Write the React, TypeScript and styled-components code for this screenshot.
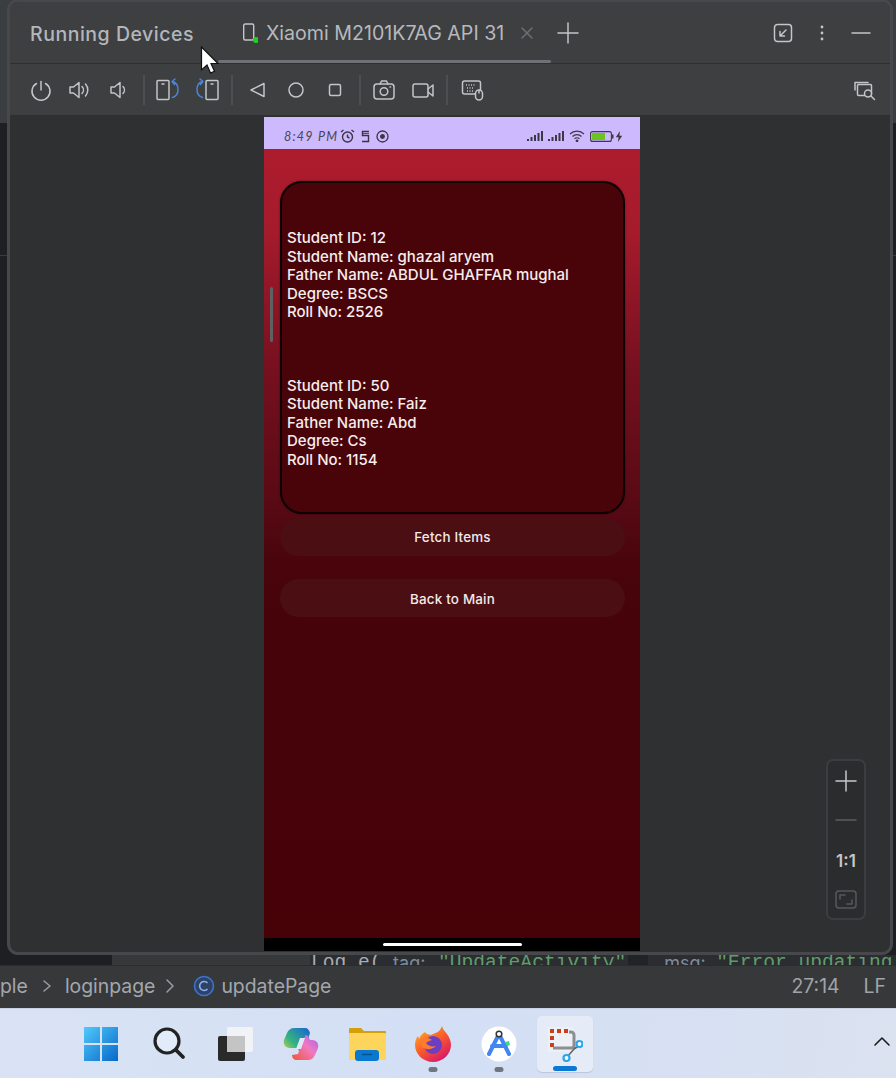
import React from "react";
import styled, { createGlobalStyle } from "styled-components";

const Global = createGlobalStyle`
  html, body { margin: 0; padding: 0; background: #2b2d30; overflow: hidden; }
  * { box-sizing: border-box; }
`;

const Page = styled.div`
  width: 896px; height: 1078px; display: flex; flex-direction: column;
  font-family: Inter, "Noto Sans", sans-serif; overflow: hidden;
`;
const Stage = styled.div`
  position: relative; height: 965px; flex: none; overflow: hidden;
  background: linear-gradient(180deg, #3b3e40 0 123px, #1e1f22 123px 255px, #3a3b3e 255px 256px, #1e1f22 256px);
  display: flex; align-items: flex-end;
`;
const CodeLine = styled.div`
  height: 10px; width: 100%; padding-left: 311px; display: flex; white-space: pre;
  font: 19.6px/16px "Liberation Mono", monospace; color: #a9abb0; overflow: hidden;
  background: linear-gradient(90deg, #1e1f22 0 112px, #37383a 112px 310px, #2b2d30 310px 628px, #222326 628px 648px, #2b2d30 648px);
`;
const CodeHint = styled.span<{ $ml: number; $w: number }>`
  color: #7f8ca0; font: 18px/16px Inter, sans-serif; margin-left: ${p => p.$ml}px; width: ${p => p.$w}px; flex: none;
`;
const CodeString = styled.span`color: #5f9d6c;`;
const Win = styled.div`
  position: absolute; left: 7px; top: -1px; width: 886px; height: 956px;
  border: 3px solid #46484b; border-radius: 11px; background: #2f3032;
  display: flex; flex-direction: column; overflow: hidden;
`;
const Header = styled.div`
  height: 62px; flex: none; background: #3d3f41; border-bottom: 1px solid #2e3032;
  display: flex; align-items: center; position: relative; padding: 0 0 0 20px;
`;
const Title = styled.div`
  font-size: 19.5px; font-weight: 500; color: #b4b6ba; letter-spacing: .52px; width: 212px; margin-top: 2px; white-space: nowrap;
`;
const TabName = styled.div`
  font-size: 19.6px; color: #b7b9bd; margin-left: 8px; white-space: nowrap; margin-top: 1px;
`;
const TabBar = styled.div`
  position: absolute; left: 208px; bottom: 0; width: 333px; height: 3px; background: #6e7175; border-radius: 2px;
`;
const HeaderRight = styled.div`
  margin-left: auto; display: flex; align-items: center; padding-right: 10px;
`;
const Toolbar = styled.div`
  height: 51px; flex: none; background: #3d3f41; display: flex; align-items: center; padding: 0 7px 0 11.5px;
`;
const IconSlot = styled.div<{ $w?: number }>`
  width: ${p => p.$w ?? 39}px; height: 32px; display: flex; align-items: center; justify-content: center; flex: none;
`;
const Sep = styled.div<{ $l: number; $r: number }>`
  width: 2px; height: 30px; background: #4c4e51; flex: none;
  margin-left: ${p => p.$l}px; margin-right: ${p => p.$r}px;
`;
const Spacer = styled.div`flex: 1;`;
const Content = styled.div`
  flex: 1; position: relative; display: flex; flex-direction: column; align-items: center; padding: 2px 0 1px;
`;
const Grip = styled.div`
  position: absolute; left: 260px; top: 172px; width: 3px; height: 55px; background: #5f6062; border-radius: 2px;
`;
const Phone = styled.div`
  width: 376px; flex: 1; display: flex; flex-direction: column; margin-left: 4px;
`;
const PhoneStatus = styled.div`
  height: 32px; flex: none; background: #cdb9fd; display: flex; align-items: center; padding: 6px 17px 0 20px; color: #4a4552;
`;
const Clock = styled.div`
  font: italic 12.5px "Lato", sans-serif; letter-spacing: 1.25px; width: 56px; white-space: nowrap;
`;
const StatusIcons = styled.div`display: flex; align-items: center; gap: 3px;`;
const Screen = styled.div`
  flex: 1; padding: 32px 15px 0 16px; display: flex; flex-direction: column;
  background: linear-gradient(180deg, #ac1c2d 0%, #a61b2c 10%, #76101f 28%, #580a14 45%, #4a050c 52%, #46030a 60%, #470208 100%);
`;
const Card = styled.div`
  height: 333px; border: 2px solid #0c0000; border-radius: 22px; background: #490409; padding: 46px 5px 0;
  display: flex; flex-direction: column; gap: 55px; flex: none;
  box-shadow: 0 0 2px rgba(0,0,0,.5);
`;
const Record = styled.div`
  font-size: 15px; font-weight: 500; line-height: 18.5px; color: #f6eded; white-space: nowrap;
`;
const ActionButton = styled.div<{ $top: number }>`
  height: 38px; border-radius: 19px; background: #4b0e12; flex: none; margin-top: ${p => p.$top}px; padding-top: ${p => (p.$top > 10 ? 1 : 0)}px;
  display: flex; align-items: center; justify-content: center; color: #f3e9e9; font-size: 13.4px; font-weight: 500; letter-spacing: .2px;
`;
const NavBar = styled.div`
  height: 13px; flex: none; background: #000; display: flex; justify-content: center; padding-top: 5px;
`;
const HomePill = styled.div`width: 139px; height: 3px; border-radius: 2px; background: #fff;`;
const ZoomBox = styled.div`
  position: absolute; left: 816px; bottom: 32px; width: 40px; height: 161px; border: 2px solid #3c3d40; border-radius: 7px;
  background: #2b2c2e; display: flex; flex-direction: column; align-items: center;
`;
const ZoomItem = styled.div`
  height: 39px; display: flex; align-items: center; justify-content: center; flex: none;
`;
const ZoomRatio = styled.div`
  height: 41px; padding-top: 2px; display: flex; align-items: center; justify-content: center; flex: none; color: #c4c6ca;
  font-size: 17px; font-weight: 600;
`;
const StatusBar = styled.div`
  height: 43px; flex: none; background: #37383a; border-top: 1px solid #2b2c2e; display: flex; align-items: center;
  font-size: 19.4px; color: #a3a7ad; padding: 0 10px 2px 0; white-space: nowrap;
`;
const Crumb = styled.span<{ $ml?: number }>`margin-left: ${p => p.$ml ?? 0}px; display: flex;`;
const StatusRight = styled.div`margin-left: auto; display: flex; gap: 24px; color: #a0a3a8;`;
const Taskbar = styled.div`
  flex: 1; background: linear-gradient(100deg, #d9e3f4, #d3dff5 50%, #dbe2f0); display: flex; align-items: center; padding-left: 68px; position: relative;
  border-top: 1px solid #c9d2e2;
`;
const TaskSlot = styled.div<{ $active?: boolean; $w?: number }>`
  width: ${p => (p.$active ? 56 : p.$w ?? 66)}px; margin: 0 ${p => (p.$active ? 5 : 0)}px; height: 56px; display: flex; align-items: center; justify-content: center; flex: none;
  position: relative; border-radius: 5px;
  background: ${p => (p.$active ? "#e5ecf8" : "transparent")};
  box-shadow: ${p => (p.$active ? "0 1px 1px #bcc6d8" : "none")};
`;
const TaskDot = styled.div`
  position: absolute; left: 50%; transform: translateX(-50%); bottom: 0; width: 9px; height: 5px; border-radius: 3px; background: #6f7680;
`;
const TaskBlue = styled.div`
  position: absolute; left: 50%; transform: translateX(-50%); bottom: 1px; width: 24px; height: 5px; border-radius: 3px; background: #0c78d4;
`;
const Chevron = styled.div`position: absolute; right: 5px; top: 26px; display: flex;`;
const Cursor = styled.svg`position: absolute; left: 200px; top: 46px;`;

const Ico = styled.svg`fill: none; stroke: #c3c5c9; stroke-width: 1.5; stroke-linecap: round; stroke-linejoin: round; display: block;`;

const I = ({ s = 24, children }: { s?: number; children: React.ReactNode }) => (
  <Ico width={s} height={s} viewBox={`0 0 ${s} ${s}`}>{children}</Ico>
);

const BLUE = "#4c85d8";

const Signal = () => (
  <svg width="18" height="10" viewBox="0 0 18 10">
    {[0, 1, 2, 3, 4].map(i => (
      <rect key={i} x={i * 3.5} y={8 - i * 2} width="2" height={2 + i * 2} fill="#3d3846" />
    ))}
  </svg>
);

export default function App() {
  return (
    <Page>
      <Global />
      <Stage>
        <CodeLine>
          Log.e(
          <CodeHint $ml={11.5} $w={45}>tag:</CodeHint>
          <CodeString>"UpdateActivity"</CodeString>
          <CodeHint $ml={38} $w={52}>msg:</CodeHint>
          <CodeString>"Error updating</CodeString>
        </CodeLine>
        <Win>
          <Header>
            <Title>Running Devices</Title>
            <svg width="16" height="20" viewBox="0 0 16 20" style={{ flex: "none" }}>
              <rect x="1.7" y="1" width="10" height="16" rx="1.5" fill="none" stroke="#c3c5c9" strokeWidth="1.4" />
              <circle cx="14" cy="17" r="3" fill="#1fd01f" />
            </svg>
            <TabName>Xiaomi M2101K7AG API 31</TabName>
            <IconSlot $w={46}>
              <I s={14}><path d="M2 2 12 12M12 2 2 12" stroke="#6c6f73" /></I>
            </IconSlot>
            <IconSlot $w={36}>
              <I s={22}><path d="M11 1v20M1 11h20" /></I>
            </IconSlot>
            <HeaderRight>
              <IconSlot><I><rect x="3.500" y="3.500" width="17" height="17" rx="3" /><path d="M15 9l-6 6M9 10.500V15h4.500" /></I></IconSlot>
              <IconSlot><I s={16}><circle cx="8" cy="2" r="1.400" fill="#c3c5c9" stroke="none" /><circle cx="8" cy="8" r="1.400" fill="#c3c5c9" stroke="none" /><circle cx="8" cy="14" r="1.400" fill="#c3c5c9" stroke="none" /></I></IconSlot>
              <IconSlot><I><path d="M3 12h18" /></I></IconSlot>
            </HeaderRight>
            <TabBar />
          </Header>
          <Toolbar>
            <IconSlot><I><path d="M12 3.500V12" /><path d="M7.500 5.500a9 9 0 1 0 9 0" /></I></IconSlot>
            <IconSlot><I><path d="M2 9v6h3.500l5.500 4.500v-15L5.500 9z" /><path d="M14 8.500a5 5 0 0 1 0 7M17.500 6a9 9 0 0 1 0 12" /></I></IconSlot>
            <IconSlot><I><path d="M4 9v6h3.500l5.500 4.500v-15L7.500 9z" /><path d="M16 8.500a5 5 0 0 1 0 7" /></I></IconSlot>
            <Sep $l={4.5} $r={3} />
            <IconSlot><I><rect x="1" y="2.500" width="12" height="19" rx="1" /><path d="M6 6h2" /><path d="M16.500 3.500c4 1 5.500 4 5.500 8s-1.500 7-5.500 8M16 3.500l3-2.500M16 3.500l2.500 3" stroke={BLUE} /></I></IconSlot>
            <IconSlot><I><rect x="11" y="2.500" width="12" height="19" rx="1" /><path d="M16 6h2" /><path d="M7.500 3.500c-4 1-5.500 4-5.500 8s1.500 7 5.500 8M8 3.500 5 1M8 3.500 5.500 6.500" stroke={BLUE} /></I></IconSlot>
            <Sep $l={4.500} $r={5} />
            <IconSlot><I s={20}><path d="M17 3.500v13L4 10z" /></I></IconSlot>
            <IconSlot><I s={20}><circle cx="10" cy="10" r="7" /></I></IconSlot>
            <IconSlot><I s={20}><rect x="4.500" y="4.500" width="11" height="11" rx="1.500" /></I></IconSlot>
            <Sep $l={4} $r={4} />
            <IconSlot><I><rect x="2" y="6" width="20" height="15" rx="3" /><circle cx="12" cy="13.500" r="3.800" /><path d="M8 6l1.500-3h5L16 6" /><path d="M18 9h.5" /></I></IconSlot>
            <IconSlot><I><rect x="2" y="6" width="15" height="13" rx="2" /><path d="M17 11l5-4v11l-5-4" /></I></IconSlot>
            <Sep $l={3.500} $r={5} />
            <IconSlot><I><rect x="1.500" y="3" width="18" height="13" rx="2" /><path d="M5 7h9M6 10h7M6 13h7" strokeDasharray="1 1.500" strokeLinecap="butt" /><rect x="14.500" y="12" width="7" height="10" rx="3.500" fill="#3d3f41" /><path d="M18 12v3" /></I></IconSlot>
            <Spacer />
            <IconSlot><I><path d="M3 12V4.500h13" /><rect x="5.500" y="6.500" width="14" height="11" rx="1" /><circle cx="16" cy="15.500" r="3.500" fill="#3d3f41" /><path d="M19 18l3.500 3.500" /></I></IconSlot>
          </Toolbar>
          <Content>
            <Grip />
            <Phone>
              <PhoneStatus>
                <Clock>8:49 PM</Clock>
                <StatusIcons>
                  <svg width="15" height="15" viewBox="0 0 15 15" fill="none" stroke="#3b3542" strokeWidth="1.400"><circle cx="7.500" cy="8" r="5" /><path d="M7.500 5.500V8l2 1M1 3l2.500-2M14 3l-2.500-2" /></svg>
                  <svg width="15" height="13" viewBox="0 0 15 13" fill="none" stroke="#3b3542" strokeWidth="1.400"><path d="M11 1.500H4.500v4h6v6H4" /><path d="M4 3.500h7" strokeWidth=".8" /></svg>
                  <svg width="15" height="15" viewBox="0 0 15 15" fill="none" stroke="#3b3542" strokeWidth="1.300" style={{ marginLeft: -1 }}><circle cx="7.500" cy="7.500" r="5.500" /><circle cx="7.500" cy="7.500" r="1.800" fill="#3b3542" /></svg>
                </StatusIcons>
                <Spacer />
                <StatusIcons>
                  <Signal /><Signal />
                  <svg width="16" height="12" viewBox="0 0 16 12" fill="none" stroke="#3d3846" strokeWidth="1.200"><path d="M1 4a10 10 0 0 1 14 0M3.500 6.500a6.500 6.500 0 0 1 9 0M5.500 8.800a3.500 3.500 0 0 1 5 0" /><circle cx="8" cy="10.800" r=".8" fill="#3d3846" /></svg>
                  <svg width="24" height="11" viewBox="0 0 24 11" style={{ marginLeft: 2 }}><rect x=".6" y=".6" width="20.800" height="9.800" rx="2" fill="none" stroke="#3d3846" strokeWidth="1.100" /><rect x="2" y="2" width="13" height="7" fill="#6cc21e" /><rect x="22" y="3.500" width="1.500" height="4" fill="#3d3846" /></svg>
                  <svg width="8" height="11" viewBox="0 0 8 11" style={{ marginLeft: -2 }}><path d="M5 0 .8 6.200h2.800L3 11l4.200-6.300H4.400z" fill="#3d3846" /></svg>
                </StatusIcons>
              </PhoneStatus>
              <Screen>
                <Card>
                  <Record>
                    <div>Student ID: 12</div>
                    <div>Student Name: ghazal aryem</div>
                    <div>Father Name: ABDUL GHAFFAR mughal</div>
                    <div>Degree: BSCS</div>
                    <div>Roll No: 2526</div>
                  </Record>
                  <Record>
                    <div>Student ID: 50</div>
                    <div>Student Name: Faiz</div>
                    <div>Father Name: Abd</div>
                    <div>Degree: Cs</div>
                    <div>Roll No: 1154</div>
                  </Record>
                </Card>
                <ActionButton $top={4}>Fetch Items</ActionButton>
                <ActionButton $top={23}>Back to Main</ActionButton>
              </Screen>
              <NavBar><HomePill /></NavBar>
            </Phone>
            <ZoomBox>
              <ZoomItem><I s={22}><path d="M11 1v20M1 11h20" stroke="#c6c8cc" /></I></ZoomItem>
              <ZoomItem><I s={22}><path d="M1 11h20" stroke="#5c5e62" /></I></ZoomItem>
              <ZoomRatio>1:1</ZoomRatio>
              <ZoomItem>
                <I s={24}><rect x="2" y="3" width="20" height="17" rx="3" stroke="#56585b" /><path d="M6 11V7h5M18 12v4h-5" stroke="#56585b" /></I>
              </ZoomItem>
            </ZoomBox>
          </Content>
        </Win>
        <Cursor width="20" height="30" viewBox="0 0 20 30">
          <path d="M1.500 1v23l5.500-5 3.500 8 4-1.700-3.500-7.800H18z" fill="#fff" stroke="#111" strokeWidth="1.200" />
        </Cursor>
      </Stage>
      <StatusBar>
        <Crumb>ple</Crumb>
        <Crumb $ml={6}><I s={24}><path d="M10 7l6 5-6 5" stroke="#9a9da2" /></I></Crumb>
        <Crumb $ml={7}>loginpage</Crumb>
        <Crumb $ml={7}><I s={18}><path d="M5 3l6 6-6 6" stroke="#9a9da2" /></I></Crumb>
        <Crumb $ml={13}>
          <svg width="22" height="22" viewBox="0 0 22 22" fill="none"><circle cx="11" cy="11" r="9.500" stroke="#3b74cc" strokeWidth="1.600" fill="#2e4268" /><path d="M14.500 8a4.500 4.500 0 1 0 0 6" stroke="#8db1ea" strokeWidth="1.600" /></svg>
        </Crumb>
        <Crumb $ml={6}>updatePage</Crumb>
        <StatusRight>
          <span>27:14</span>
          <span>LF</span>
        </StatusRight>
      </StatusBar>
      <Taskbar>
        <TaskSlot $w={68}>
          <svg width="36" height="36" viewBox="0 0 36 36" style={{ marginRight: 2 }}>
            <defs><linearGradient id="w" x1="0" y1="0" x2="1" y2="1"><stop offset="0" stopColor="#52c8fb" /><stop offset="1" stopColor="#0669c9" /></linearGradient></defs>
            <path d="M1 1h16v16H1zM19 1h16v16H19zM1 19h16v16H1zM19 19h16v16H19z" fill="url(#w)" />
          </svg>
        </TaskSlot>
        <TaskSlot>
          <svg width="34" height="36" viewBox="0 0 34 36" fill="none" stroke="#222" strokeWidth="3.200" strokeLinecap="round"><circle cx="15" cy="15" r="12" fill="#e2ebfa" /><path d="M24 24l7 7" strokeWidth="3.800" /></svg>
        </TaskSlot>
        <TaskSlot>
          <svg width="36" height="36" viewBox="0 0 36 36">
            <rect x="1" y="10" width="27" height="25" rx="2" fill="#2a2a2a" />
            <rect x="10" y="1" width="26" height="25" rx="2" fill="#f6f6f6" fillOpacity=".85" />
            <rect x="10" y="10" width="18" height="16" fill="#c4c4c4" />
          </svg>
        </TaskSlot>
        <TaskSlot>
          <svg width="36" height="34" viewBox="0 0 36 34">
            <defs>
              <linearGradient id="c1" x1="0" y1="1" x2="1" y2="0"><stop offset="0" stopColor="#e8d73f" /><stop offset=".4" stopColor="#36b37e" /><stop offset="1" stopColor="#1662d6" /></linearGradient>
              <linearGradient id="c2" x1="0" y1="1" x2="1" y2="0"><stop offset="0" stopColor="#f0553a" /><stop offset=".55" stopColor="#f07ac0" /><stop offset="1" stopColor="#a860e8" /></linearGradient>
            </defs>
            <path d="M11 1h11c3 0 4 2 5 5l-6 19c-1 3-3 4-5 0l-1-4H7c-5 0-7-4-6-8l3-7c1-3 4-5 7-5z" fill="url(#c1)" />
            <path d="M25 33H14c-3 0-5-2-5-5l6-1 7-18c1-2 3-1 4 2l1 2h2c5 0 7 4 6 8l-3 7c-1 3-4 5-7 5z" fill="url(#c2)" />
            <path d="M17 11h5l-4 11h-5z" fill="#dfe8f8" />
          </svg>
        </TaskSlot>
        <TaskSlot>
          <svg width="38" height="34" viewBox="0 0 38 34">
            <path d="M1 2a1 1 0 0 1 1-1h11l3 3H37a1 1 0 0 1 1 1v4H1z" fill="#d59e0b" />
            <path d="M1 6h36a1 1 0 0 1 1 1v26H1z" fill="#fdd45c" />
            <rect x="7" y="23" width="24" height="11" rx="3" fill="#0a78cf" />
            <path d="M14 27.500h10" stroke="#06508c" strokeWidth="1.500" />
          </svg>
        </TaskSlot>
        <TaskSlot>
          <svg width="36" height="38" viewBox="0 0 36 38">
            <defs><linearGradient id="f" x1="0" y1="0" x2=".7" y2="1"><stop offset="0" stopColor="#ffbf2d" /><stop offset=".55" stopColor="#fb5a2a" /><stop offset="1" stopColor="#d6186c" /></linearGradient></defs>
            <path d="M27 1c1 4 3 5 5 8 3 4 4 8 4 11 0 9-8 17-18 17S0 29 0 20c0-3 1-7 3-9l1 3c1-3 3-5 6-7 1 2 3 2 6 3 3-2 9-2 11-9z" fill="url(#f)" />
            <circle cx="18" cy="20" r="9" fill="#6a3fc4" />
            <path d="M5 15c3-3 8-3 12 0-3 1-5 2-6 3 2 3 6 4 10 3-4 4-10 4-14 1z" fill="#fd7a2e" />
          </svg>
          <TaskDot />
        </TaskSlot>
        <TaskSlot>
          <svg width="36" height="36" viewBox="0 0 36 36">
            <circle cx="18" cy="18" r="17.500" fill="#fff" />
            <path d="M18 8 8 28M18 8l10 20M11 20h14" fill="none" stroke="#4285f4" strokeWidth="4" strokeLinecap="round" />
            <circle cx="18" cy="8" r="2.800" fill="#fff" stroke="#333" strokeWidth="1.500" />
            <path d="M24 16l4-1 1 4-3 1z" fill="#3ddc84" />
          </svg>
          <TaskDot />
        </TaskSlot>
        <TaskSlot $active>
          <svg width="36" height="36" viewBox="0 0 36 36">
            <rect x="1" y="1" width="25" height="25" fill="#edf0f5" />
            <path d="M3 3h4v4H3zM10 3h4v4h-4zM17 3h4v4h-4zM3 10h4v4H3zM3 17h4v4H3z" fill="#c8401a" />
            <path d="M22 6h2a3 3 0 0 1 3 3v14M6 22h18a3 3 0 0 0 3-2" fill="none" stroke="#8b8f95" strokeWidth="3" />
            <path d="M21 30l6-7M27 23l6-4" stroke="#666" strokeWidth="1.600" />
            <circle cx="32.500" cy="18" r="3" fill="#fff" stroke="#2aa7ea" strokeWidth="2.200" />
            <circle cx="19.500" cy="32" r="3" fill="#fff" stroke="#2aa7ea" strokeWidth="2.200" />
          </svg>
          <TaskBlue />
        </TaskSlot>
        <Chevron>
          <svg width="18" height="12" viewBox="0 0 18 12" fill="none" stroke="#1c1c1c" strokeWidth="1.600" strokeLinecap="round" strokeLinejoin="round"><path d="M2 10l7-7 7 7" /></svg>
        </Chevron>
      </Taskbar>
    </Page>
  );
}
